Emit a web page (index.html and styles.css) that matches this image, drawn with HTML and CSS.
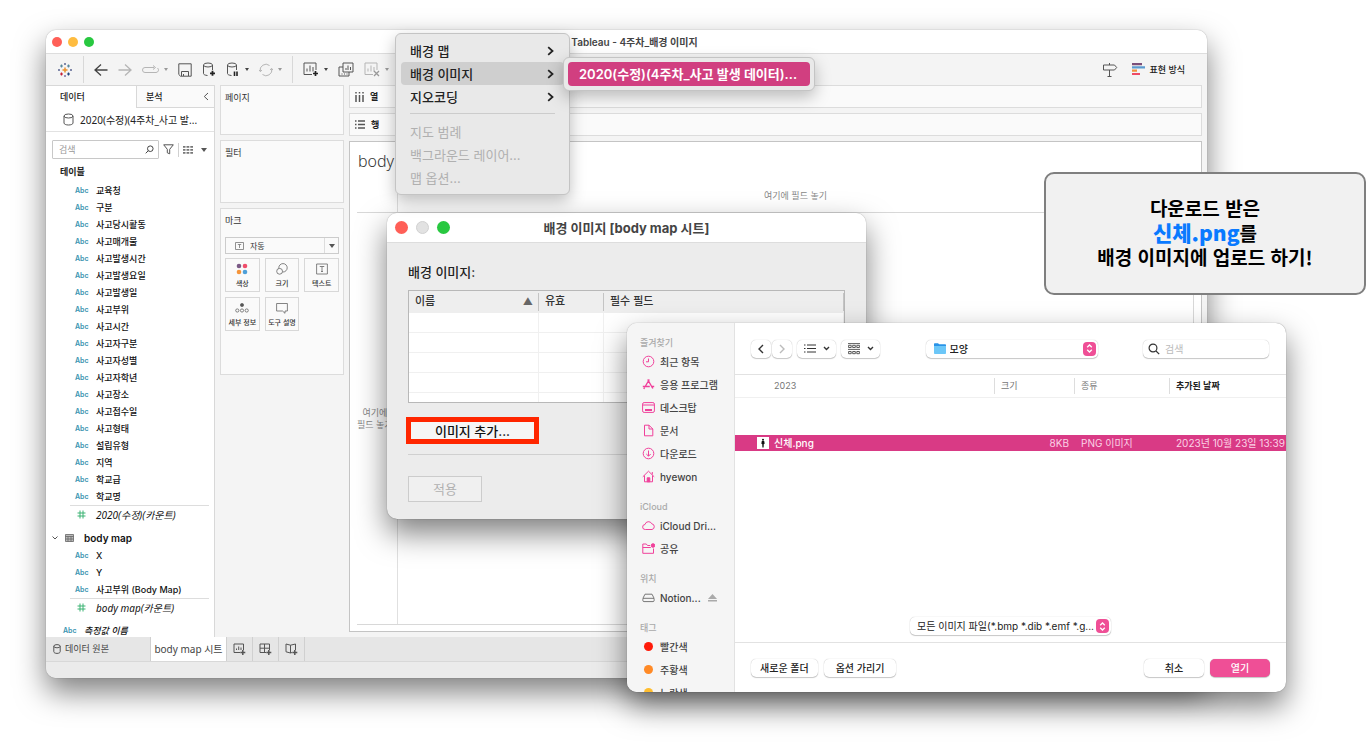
FILE: index.html
```html
<!DOCTYPE html>
<html lang="ko">
<head>
    <meta charset="UTF-8">
    <meta name="viewport" content="width=device-width, initial-scale=1.0">
    <title>Tableau - 4주차_배경 이미지</title>
    <link rel="stylesheet" href="styles.css">
</head>
<body>
    <div class="desktop">
        <!-- Main window -->
        <div class="window app">
            <header class="titlebar">
                <div class="lights"><i class="light red"></i><i class="light yellow"></i><i class="light green"></i></div>
                <h1>Tableau - 4주차_배경 이미지</h1>
            </header>

            <div class="toolbar">
                <svg class="logo" width="16" height="16" viewBox="0 0 16 16" fill="none" stroke-width="1.2">
                    <path stroke="#eb912c" stroke-width="1.5" d="M8 5.5v5M5.5 8h5"/>
                    <path stroke="#59879b" d="M4.5 2.5v3M3 4h3M11.5 2.5v3M10 4h3"/>
                    <path stroke="#c72035" d="M4.5 10.5v3M3 12h3"/>
                    <path stroke="#1f447e" d="M11.5 10.5v3M10 12h3"/>
                    <path stroke="#5b6591" stroke-width="1" d="M8 1v2M7 2h2M14 7v2M13 8h2M2 7v2M1 8h2"/>
                    <path stroke="#7b6fa5" stroke-width="1" d="M8 13v2M7 14h2"/>
                </svg>
                <span class="divider"></span>
                <button class="tool" aria-label="뒤로"><svg width="14" height="14" viewBox="0 0 14 14"><path d="M13.500 7H1M7 1.500L1 7l6 5.500" stroke="#444" stroke-width="1.300"/></svg></button>
                <button class="tool off" aria-label="앞으로"><svg width="14" height="14" viewBox="0 0 14 14"><path stroke-width="1.300" d="M.5 7H13M7 1.500L13 7l-6 5.500"/></svg></button>
                <button class="tool off menu-tool" aria-label="다시 실행"><svg width="17" height="12" viewBox="0 0 17 12"><path d="M12 3.500H3a2.500 2.500 0 0 0 0 5h11a2.500 2.500 0 0 0 1.500-4.500M12 3.500H9.500M11 1.500l2.500 2-2.500 2"/></svg><i class="caret"></i></button>
                <button class="tool" aria-label="저장"><svg width="14" height="14" viewBox="0 0 14 14"><path d="M.8.8h12.400v12.400H2.500L.8 11.500zM3.500 13V8.500h7V13M5.500 13v-2"/></svg></button>
                <button class="tool" aria-label="새 데이터 원본"><svg width="14" height="15" viewBox="0 0 14 15"><ellipse cx="6" cy="3" rx="4.500" ry="2"/><path d="M1.500 3v8.500c0 1 1.500 1.800 4 2M10.500 3v5"/><path d="M10.500 8.800v5M8 11.300h5" stroke="#222" stroke-width="1.800"/></svg></button>
                <button class="tool menu-tool" aria-label="업데이트 일시 중지"><svg width="14" height="15" viewBox="0 0 14 15"><ellipse cx="6" cy="3" rx="4.500" ry="2"/><path d="M1.500 3v8.500c0 1 1.500 1.800 4 2M10.500 3v5"/><path d="M8.500 9.500v4.500M11 9.500v4.500" stroke="#222" stroke-width="1.600"/></svg><i class="caret dark"></i></button>
                <button class="tool off menu-tool" aria-label="새로 고침"><svg width="14" height="14" viewBox="0 0 14 14"><path d="M1.300 8.500A5.800 5.800 0 0 1 10.500 2.500M12.700 5.500A5.800 5.800 0 0 1 3.500 11.500M0 6.800l1.300 1.700L3 7.200M14 7.200l-1.300-1.700L11 6.800"/></svg><i class="caret"></i></button>
                <span class="divider"></span>
                <button class="tool menu-tool" aria-label="새 워크시트"><svg width="16" height="15" viewBox="0 0 16 15"><path d="M9 12.500H1V1h12v7M4 9.500v-3M7 9.500v-6M10 9.500V5" /><path d="M12.500 9v5M10 11.500h5" stroke="#222" stroke-width="1.700"/></svg><i class="caret dark"></i></button>
                <button class="tool" aria-label="복제"><svg width="16" height="15" viewBox="0 0 16 15"><path d="M5 1h10v9H5zM8 8V6M10 8V3.500M12.500 8V5M5 5H1v9h10v-4M4 11.500v1M6.500 11.500v1M9 11.500v1"/></svg></button>
                <button class="tool off menu-tool" aria-label="시트 지우기"><svg width="16" height="15" viewBox="0 0 16 15"><path d="M9 12.500H1V1h12v7M4 9.500v-3M7 9.500v-6M10 9.500V5"/><path d="M10 9l5 5M15 9l-5 5" stroke="#999" stroke-width="1.300"/></svg><i class="caret"></i></button>
                <div class="toolbar-end">
                    <button class="tool" aria-label="데이터 가이드"><svg width="16" height="16" viewBox="0 0 16 16"><path d="M1.500 3h11l2.200 2.500L12.500 8h-11zM7.500 1v2M7.500 8v6.500M5.500 14.500h4"/></svg></button>
                    <button class="show-me">
                        <svg width="14" height="13" viewBox="0 0 14 13"><path fill="#7b4f79" d="M0 0h10v2.200H0z"/><path fill="#5b9bd0" d="M0 3.300h13v2.200H0z"/><path fill="#f0903c" d="M0 6.600h5v2.200H0z"/><path fill="#ee4b66" d="M0 9.900h8v2.200H0z"/></svg>
                        표현 방식
                    </button>
                </div>
            </div>

            <div class="workspace">
                <aside class="data-pane">
                    <div class="pane-tabs">
                        <button class="pane-tab active">데이터</button>
                        <button class="pane-tab">분석 <svg width="6" height="9" viewBox="0 0 6 9" fill="none" stroke="#555"><path d="M5 1L1.300 4.500 5 8"/></svg></button>
                    </div>
                    <div class="source">
                        <svg width="11" height="13" viewBox="0 0 11 13" fill="none" stroke="#555"><ellipse cx="5.500" cy="3" rx="4.500" ry="2"/><path d="M1 3v7c0 1.200 2 2 4.500 2S10 11.200 10 10V3"/></svg>
                        2020(수정)(4주차_사고 발...
                    </div>
                    <div class="search-row">
                        <div class="search-box">
                            <input type="text" placeholder="검색" aria-label="필드 검색">
                            <svg width="9" height="9" viewBox="0 0 9 9" fill="none" stroke="#444"><circle cx="5.300" cy="3.700" r="2.800"/><path d="M3.300 5.700L.7 8.300"/></svg>
                        </div>
                        <svg width="11" height="11" viewBox="0 0 11 11" fill="none" stroke="#555"><path d="M.7.8h9.600L6.700 5.300v4.500l-2.400-1V5.300z"/></svg>
                        <span class="search-divider"></span>
                        <svg width="10" height="8" viewBox="0 0 10 8" fill="#777"><path d="M0 0h2.500v1.800H0zM3.500 0h2.800v1.800H3.500zM7.300 0H10v1.800H7.300zM0 3h2.500v1.800H0zM3.500 3h2.800v1.800H3.500zM7.300 3H10v1.800H7.300zM0 6h2.500v1.800H0zM3.500 6h2.800v1.800H3.500zM7.300 6H10v1.800H7.300z"/></svg>
                        <i class="caret big"></i>
                    </div>
                    <h2 class="fields-title">테이블</h2>
                    <ul class="fields">
                        <li><b>Abc</b>교육청</li>
                        <li><b>Abc</b>구분</li>
                        <li><b>Abc</b>사고당시활동</li>
                        <li><b>Abc</b>사고매개물</li>
                        <li><b>Abc</b>사고발생시간</li>
                        <li><b>Abc</b>사고발생요일</li>
                        <li><b>Abc</b>사고발생일</li>
                        <li><b>Abc</b>사고부위</li>
                        <li><b>Abc</b>사고시간</li>
                        <li><b>Abc</b>사고자구분</li>
                        <li><b>Abc</b>사고자성별</li>
                        <li><b>Abc</b>사고자학년</li>
                        <li><b>Abc</b>사고장소</li>
                        <li><b>Abc</b>사고접수일</li>
                        <li><b>Abc</b>사고형태</li>
                        <li><b>Abc</b>설립유형</li>
                        <li><b>Abc</b>지역</li>
                        <li><b>Abc</b>학교급</li>
                        <li><b>Abc</b>학교명</li>
                        <li class="measure"><svg width="9" height="9" viewBox="0 0 9 9" fill="none" stroke="#3bb273"><path d="M3 .5v8M6 .5v8M.5 3h8M.5 6h8"/></svg><em>2020(수정)(카운트)</em></li>
                    </ul>
                    <div class="table-name">
                        <svg width="6" height="4" viewBox="0 0 6 4" fill="none" stroke="#555"><path d="M.5.5L3 3 5.500.5"/></svg>
                        <svg width="9" height="8" viewBox="0 0 9 8" fill="#bbb" stroke="#666"><path d="M.5.5h8v7h-8zM.5 2.500h8M.5 5h8M3 2.500v5M6 2.500v5" stroke-width=".8"/></svg>
                        body map
                    </div>
                    <ul class="fields">
                        <li><b>Abc</b>X</li>
                        <li><b>Abc</b>Y</li>
                        <li><b>Abc</b>사고부위 (Body Map)</li>
                        <li class="measure"><svg width="9" height="9" viewBox="0 0 9 9" fill="none" stroke="#3bb273"><path d="M3 .5v8M6 .5v8M.5 3h8M.5 6h8"/></svg><em>body map(카운트)</em></li>
                    </ul>
                    <ul class="fields loose">
                        <li><b>Abc</b><em>측정값 이름</em></li>
                    </ul>
                </aside>

                <div class="cards">
                    <section class="card pages">페이지</section>
                    <section class="card filters">필터</section>
                    <section class="card marks">
                        마크
                        <div class="mark-type">
                            <svg width="9" height="8" viewBox="0 0 9 8" fill="none" stroke="#777" stroke-width=".8"><path d="M.5.5h8v7h-8zM2.800 2.500h3.400M4.500 2.500v3.500"/></svg>
                            <select aria-label="마크 유형"><option>자동</option></select>
                            <span class="mark-arrow"><i class="caret big"></i></span>
                        </div>
                        <div class="mark-grid">
                            <button><svg width="12" height="12" viewBox="0 0 12 12"><circle cx="3" cy="3" r="2.300" fill="#7b5a86"/><circle cx="9" cy="3" r="2.300" fill="#f04d6b"/><circle cx="3" cy="9" r="2.300" fill="#f5953b"/><circle cx="9" cy="9" r="2.300" fill="#4fa0d8"/></svg>색상</button>
                            <button><svg width="12" height="12" viewBox="0 0 12 12"><circle cx="7" cy="4.800" r="4.200"/><circle cx="3.600" cy="8.300" r="2.900" fill="#fafafa"/></svg>크기</button>
                            <button><svg width="12" height="12" viewBox="0 0 12 12"><path d="M.6 1h10.800v10H.6zM4 4V3.500h4V4M6 3.500v5M5 8.500h2"/></svg>텍스트</button>
                            <button><svg width="14" height="12" viewBox="0 0 14 12"><circle cx="7" cy="3" r="1.600" fill="#555"/><circle cx="2.300" cy="8.500" r="1.600"/><circle cx="7" cy="8.500" r="1.600"/><circle cx="11.700" cy="8.500" r="1.600"/></svg>세부 정보</button>
                            <button><svg width="12" height="12" viewBox="0 0 12 12"><path d="M.6 1.500h10.800v7.500H9V11.300L6.500 9H.6z"/></svg>도구 설명</button>
                        </div>
                    </section>
                </div>

                <main class="view-pane">
                    <div class="shelf"><svg width="9" height="10" viewBox="0 0 9 10" stroke="#555" stroke-width="1.500"><path d="M1 0v1.500M1 3v7M4.500 0v1.500M4.500 3v7M8 0v1.500M8 3v7"/></svg>열</div>
                    <div class="shelf"><svg width="10" height="9" viewBox="0 0 10 9" stroke="#555" stroke-width="1.500"><path d="M0 1h1.500M3 1h7M0 4.500h1.500M3 4.500h7M0 8h1.500M3 8h7"/></svg>행</div>
                    <div class="view">
                        <h2>body map 시트</h2>
                        <div class="crosstab">
                            <div class="corner"></div>
                            <div class="drop-cols">여기에 필드 놓기</div>
                            <div class="drop-rows">여기에<br>필드 놓기</div>
                            <div class="drop-body"></div>
                        </div>
                    </div>
                </main>
            </div>

            <nav class="sheet-tabs">
                <button class="sheet source-tab"><svg width="8" height="10" viewBox="0 0 8 10" fill="none" stroke="#555"><ellipse cx="4" cy="2.200" rx="3.200" ry="1.600"/><path d="M.8 2.200v5.500c0 1 1.400 1.700 3.200 1.700s3.200-.7 3.200-1.700V2.200"/></svg>데이터 원본</button>
                <button class="sheet current">body map 시트</button>
                <button class="sheet icon" aria-label="새 워크시트"><svg width="13" height="13" viewBox="0 0 13 13"><path d="M7 9.500H1V1h9.500v6M3.500 7V5.500M5.700 7V3.500M8 7V4.500"/><path d="M9.800 7v5M7.300 9.500h5" stroke-width="1.500"/></svg></button>
                <button class="sheet icon" aria-label="새 대시보드"><svg width="13" height="13" viewBox="0 0 13 13"><path d="M7 9.500H1V1h9.500v6M1 5.200h9.500M5.500 1v8.500"/><path d="M9.800 7v5M7.300 9.500h5" stroke-width="1.500"/></svg></button>
                <button class="sheet icon" aria-label="새 스토리"><svg width="13" height="13" viewBox="0 0 13 13"><path d="M7 9.500L5.500 10 1 8.800V1l4.500 1.200L10.500 1v6M5.500 2.200V10"/><path d="M9.800 7v5M7.300 9.500h5" stroke-width="1.500"/></svg></button>
            </nav>
            <footer class="status"></footer>
        </div>

        <!-- Background images dialog -->
        <div class="window images-dialog">
            <header class="titlebar">
                <div class="lights"><i class="light red"></i><i class="light gray"></i><i class="light green"></i></div>
                <h2>배경 이미지 [body map 시트]</h2>
            </header>
            <div class="images-body">
                <p id="images-label">배경 이미지:</p>
                <table class="images-table" aria-labelledby="images-label">
                    <thead>
                        <tr><th class="col-name"><div>이름 <span class="sort">▲</span></div></th><th class="col-valid"><div>유효</div></th><th><div>필수 필드</div></th></tr>
                    </thead>
                    <tbody>
                        <tr><td></td><td></td><td></td></tr>
                        <tr><td></td><td></td><td></td></tr>
                        <tr><td></td><td></td><td></td></tr>
                        <tr><td></td><td></td><td></td></tr>
                        <tr class="cut"><td></td><td></td><td></td></tr>
                    </tbody>
                </table>
                <div class="highlight"><button>이미지 추가...</button></div>
                <hr>
                <button class="apply" disabled>적용</button>
            </div>
        </div>

        <!-- Map menu -->
        <div class="menu">
            <button>배경 맵 <svg width="7" height="10" viewBox="0 0 7 10"><path d="M1.200 1.200L5.500 5 1.200 8.800"/></svg></button>
            <button class="open">배경 이미지 <svg width="7" height="10" viewBox="0 0 7 10"><path d="M1.200 1.200L5.500 5 1.200 8.800"/></svg></button>
            <button>지오코딩 <svg width="7" height="10" viewBox="0 0 7 10"><path d="M1.200 1.200L5.500 5 1.200 8.800"/></svg></button>
            <hr>
            <button disabled>지도 범례</button>
            <button disabled>백그라운드 레이어...</button>
            <button disabled>맵 옵션...</button>
        </div>
        <div class="menu submenu">
            <button>2020(수정)(4주차_사고 발생 데이터)...</button>
        </div>

        <!-- File picker -->
        <div class="window picker">
            <aside class="places">
                <h3>즐겨찾기</h3>
                <a href="#"><svg width="13" height="13" viewBox="0 0 13 13"><circle cx="6.500" cy="6.500" r="5.300"/><path d="M6.500 3.500v3.300H4"/></svg>최근 항목</a>
                <a href="#"><svg width="13" height="13" viewBox="0 0 13 13"><path stroke-width="1.400" d="M7.300 1.500L3.500 8M5.700 1.500L10.800 10.500M.8 8.500h7M9.500 8.500h2.700M2.600 9.500L1.800 11"/></svg>응용 프로그램</a>
                <a href="#"><svg width="13" height="13" viewBox="0 0 13 13"><rect x=".6" y="1.600" width="11.800" height="9.800" rx="1.500"/><path d="M.6 4h11.800"/><path stroke-width="1.800" d="M3 9h7"/></svg>데스크탑</a>
                <a href="#"><svg width="13" height="13" viewBox="0 0 13 13"><path d="M2.500 1.200h4.500l3.800 3.800v6.800H2.500zM7 1.200V5h3.800"/></svg>문서</a>
                <a href="#"><svg width="13" height="13" viewBox="0 0 13 13"><circle cx="6.500" cy="6.500" r="5.300"/><path d="M6.500 3.500v5.500M4.300 7l2.200 2.200L8.700 7"/></svg>다운로드</a>
                <a href="#"><svg width="13" height="13" viewBox="0 0 13 13"><path d="M.8 6.800L6.500 1.200l5.700 5.600M2.500 5.500v6.300h8V5.500M10.300 4.500V2"/><path fill="#f0419b" d="M5.200 7.800h2.600v4H5.200z"/></svg>hyewon</a>
                <h3>iCloud</h3>
                <a href="#"><svg width="13" height="13" viewBox="0 0 13 13"><path d="M3.300 10.500a2.500 2.500 0 0 1-.3-5A3.600 3.600 0 0 1 9.800 4.800a2.900 2.900 0 0 1 .2 5.700z"/></svg>iCloud Dri...</a>
                <a href="#"><svg width="13" height="13" viewBox="0 0 13 13"><path d="M8 3.500H5.500L4.300 2H.8v9.300h10.700V6.500M.8 5.500h8"/><circle cx="11" cy="3.500" r="1.800" fill="#f0419b"/></svg>공유</a>
                <h3>위치</h3>
                <a href="#" class="gray"><svg width="13" height="13" viewBox="0 0 13 13"><path d="M.8 7.500L3 3.200h7l2.200 4.300M2 7.300h9a1.300 1.300 0 0 1 1.200 1.300v.7A1.300 1.300 0 0 1 11 10.600H2A1.300 1.300 0 0 1 .8 9.300v-.7A1.300 1.300 0 0 1 2 7.300z"/></svg>Notion... <svg class="eject" width="9" height="8" viewBox="0 0 9 8"><path d="M4.500 0L9 5H0zM0 6h9v1.600H0z"/></svg></a>
                <h3>태그</h3>
                <a href="#"><i class="tag tag-red"></i>빨간색</a>
                <a href="#"><i class="tag tag-orange"></i>주황색</a>
                <a href="#"><i class="tag tag-yellow"></i>노란색</a>
            </aside>
            <div class="picker-main">
                <div class="picker-bar">
                    <div class="bar-group">
                        <button class="mac-btn nav" aria-label="이전"><svg width="6" height="10" viewBox="0 0 6 10"><path d="M5 1L1 5l4 4"/></svg></button><button class="mac-btn nav" aria-label="다음" disabled><svg width="6" height="10" viewBox="0 0 6 10"><path d="M1 1l4 4-4 4"/></svg></button>
                        <button class="mac-btn wide" aria-label="목록 보기"><svg width="12" height="9" viewBox="0 0 12 9"><path stroke-width="1" d="M0 1h1.500M3 1h9M0 4.500h1.500M3 4.500h9M0 8h1.500M3 8h9"/></svg><svg width="7" height="5" viewBox="0 0 7 5"><path d="M1 1l2.500 2.500L6 1"/></svg></button>
                        <button class="mac-btn wide" aria-label="그룹"><svg width="12" height="12" viewBox="0 0 12 12"><path stroke-width=".8" d="M0 .6h12M0 6.400h12M.6 2.300h2.600v2.200H.6zM4.700 2.300h2.600v2.200H4.700zM8.800 2.300h2.600v2.200H8.800zM.6 8.500h2.600v2.200H.6zM4.700 8.500h2.600v2.200H4.700zM8.800 8.500h2.600v2.200H8.800z"/></svg><svg width="7" height="5" viewBox="0 0 7 5"><path d="M1 1l2.500 2.500L6 1"/></svg></button>
                    </div>
                    <div class="mac-select folder">
                        <svg width="12" height="11" viewBox="0 0 12 11"><path fill="#2a94e8" d="M0 1.200C0 .5.400.2 1 .2h3l1.200 1h6c.5 0 .8.300.8.800v3H0z"/><path fill="#6cc7f8" d="M0 3h12v7c0 .6-.3.900-.8.900H.8C.3 10.900 0 10.600 0 10z"/></svg>
                        <select aria-label="폴더"><option>모양</option></select>
                        <span class="stepper"><svg width="7" height="9" viewBox="0 0 7 9"><path d="M1.200 3.200L3.500 1l2.300 2.200M1.200 5.800L3.500 8l2.300-2.200"/></svg></span>
                    </div>
                    <div class="mac-search">
                        <svg width="12" height="12" viewBox="0 0 12 12" fill="none" stroke="#333" stroke-width="1.200"><circle cx="5" cy="5" r="3.900"/><path d="M8 8l3.200 3.200"/></svg>
                        <input type="text" placeholder="검색" aria-label="파일 검색">
                    </div>
                </div>
                <table class="files">
                    <thead>
                        <tr><th class="file-name">2023</th><th class="file-size"><span>크기</span></th><th class="file-kind"><span>종류</span></th><th class="sorted"><span>추가된 날짜</span></th></tr>
                    </thead>
                    <tbody>
                        <tr class="blank"><td colspan="4"></td></tr>
                        <tr class="selected">
                            <td class="file-name"><div><svg width="12" height="12" viewBox="0 0 12 12"><path fill="#fff" d="M0 0h12v12H0z"/><circle cx="6" cy="2.800" r="1" fill="#111"/><path fill="#111" d="M4.800 4h2.400l.5 2.800-.9.300L6.600 10.500H5.400L5.200 7.100l-.9-.3z"/></svg>신체.png</div></td>
                            <td class="size">8KB</td>
                            <td>PNG 이미지</td>
                            <td>2023년 10월 23일 13:39</td>
                        </tr>
                    </tbody>
                </table>
                <div class="file-type">
                    <div class="mac-select type">
                        <select aria-label="파일 형식"><option>모든 이미지 파일(*.bmp *.dib *.emf *.g...</option></select>
                        <span class="stepper"><svg width="7" height="9" viewBox="0 0 7 9"><path d="M1.200 3.200L3.500 1l2.300 2.200M1.200 5.800L3.500 8l2.300-2.200"/></svg></span>
                    </div>
                </div>
                <footer class="picker-actions">
                    <button class="mac-btn">새로운 폴더</button>
                    <button class="mac-btn">옵션 가리기</button>
                    <button class="mac-btn action cancel">취소</button>
                    <button class="mac-btn action primary">열기</button>
                </footer>
            </div>
        </div>

        <div class="callout">
            다운로드 받은<br><strong>신체.png</strong>를<br>배경 이미지에 업로드 하기!
        </div>
    </div>
</body>
</html>
```

FILE: styles.css
```css
* {
    margin: 0;
    padding: 0;
    box-sizing: border-box;
}

body {
    background-color: #ffffff;
    color: #222222;
    font-family: Inter, 'Noto Sans CJK KR', sans-serif;
    font-size: 9px;
    line-height: 12px;
}

button,
input,
select {
    font: inherit;
    color: inherit;
    background: none;
    border: none;
    outline: none;
    appearance: none;
}

button {
    display: flex;
    align-items: center;
    justify-content: center;
    white-space: nowrap;
}

svg {
    flex: none;
}

ul {
    list-style: none;
}

.desktop {
    position: relative;
    height: 100vh;
    min-height: 700px;
    padding: 30px 159px 75px 46px;
    overflow: hidden;
}

.window {
    border-radius: 10px;
    overflow: hidden;
    box-shadow: 0 0 1px rgba(0, 0, 0, 0.5), 0 14px 30px rgba(0, 0, 0, 0.5);
}

.titlebar {
    display: grid;
    grid-template-columns: 1fr auto 1fr;
    align-items: center;
    background-color: #ffffff;
    border-bottom: 1px solid #dddddd;
}

.lights {
    display: flex;
}

.light {
    border-radius: 50%;
}

.red { background-color: #ff5f57; }
.yellow { background-color: #febc40; }
.green { background-color: #28c840; }
.gray.light { background-color: #e2e2e2; border: 1px solid #d0d0d0; }

.caret {
    border: 2px solid transparent;
    border-top: 3px solid #999999;
    border-bottom: none;
}

.caret.dark { border-top-color: #444444; }

.caret.big {
    border-width: 4px 3px 0;
    border-top-color: #555555;
}

/* Main window */
.app {
    display: flex;
    flex-direction: column;
    height: 100%;
    background-color: #f4f4f4;
}

.app .titlebar {
    height: 24px;
    padding: 0 6px;
}

.app .titlebar h1 {
    padding-left: 16px;
    font-size: 10px;
    font-weight: 600;
    color: #444444;
}

.app .lights { gap: 6px; }

.app .light {
    width: 10px;
    height: 10px;
}

.toolbar {
    display: flex;
    align-items: center;
    height: 31px;
    padding: 0 22px 0 11px;
    gap: 10px;
}

.divider {
    width: 1px;
    height: 27px;
    background-color: #d8d8d8;
}

.tool svg {
    fill: none;
    stroke: #555555;
}

.tool.off svg { stroke: #b5b5b5; }

.menu-tool { gap: 5px; }

.toolbar-end {
    display: flex;
    gap: 14px;
    margin-left: auto;
}

.show-me {
    gap: 3px;
    font-weight: 500;
}

.workspace {
    display: flex;
    flex: 1;
    min-height: 0;
}

.data-pane {
    width: 169px;
    flex: none;
    background-color: #ffffff;
    border-right: 1px solid #d8d8d8;
    overflow: hidden;
}

.pane-tabs {
    display: flex;
    height: 23px;
    border-top: 1px solid #d8d8d8;
}

.pane-tab {
    width: 90px;
    padding-left: 14px;
    justify-content: flex-start;
    font-weight: 500;
}

.pane-tab + .pane-tab {
    width: 78px;
    padding: 0 5px 0 9px;
    justify-content: space-between;
    background-color: #fafafa;
    border: 1px solid #d8d8d8;
    border-top: none;
    border-right: none;
}

.source {
    display: flex;
    align-items: center;
    gap: 6px;
    height: 24px;
    padding-left: 17px;
    border-bottom: 1px solid #e2e2e2;
    font-family: 'Noto Sans', 'Noto Sans CJK KR', sans-serif;
    font-size: 10px;
    white-space: nowrap;
}

.search-row {
    display: flex;
    align-items: center;
    gap: 4px;
    padding: 8px 0 0 6px;
}

.search-box {
    display: flex;
    align-items: center;
    flex: none;
    width: 107px;
    height: 19px;
    padding: 0 4px 0 6px;
    border: 1px solid #c8c8c8;
    border-radius: 1px;
}

.search-box input {
    flex: 1;
    min-width: 0;
}

input::placeholder {
    color: #999999;
    opacity: 1;
}

.search-divider {
    width: 1px;
    height: 14px;
    background-color: #d0d0d0;
}

.search-row .caret { margin-left: 4px; }

.fields-title {
    padding: 7px 0 4px 14px;
    font-size: 9px;
    font-weight: 600;
}

.fields li {
    display: flex;
    align-items: center;
    height: 17px;
    padding-left: 29px;
    font-weight: 500;
    color: #111111;
}

.fields b {
    width: 21px;
    font-size: 7px;
    font-weight: 600;
    color: #3a93b0;
}

.fields .measure {
    height: 18px;
    margin: 0 5px 0 24px;
    padding-left: 7px;
    border-top: 1px solid #dddddd;
}

.measure em {
    font-family: 'Noto Sans', 'Noto Sans CJK KR', sans-serif;
    font-size: 10px;
    font-weight: 400;
}

.measure svg { margin-right: 10px; }

.fields.loose {
    margin-top: 6px;
}

.fields.loose li { padding-left: 17px; }

.table-name {
    display: flex;
    align-items: center;
    gap: 7px;
    height: 18px;
    margin-top: 6px;
    padding-left: 6px;
    font-size: 10px;
    font-weight: 600;
    color: #111111;
}

.table-name svg + svg { margin-right: 3px; }

.cards {
    display: flex;
    flex-direction: column;
    gap: 5px;
    width: 134px;
    flex: none;
    padding: 0 5px;
}

.card {
    padding: 6px 4px 5px;
    background-color: #fafafa;
    border: 1px solid #dcdcdc;
    color: #333333;
}

.pages { height: 50px; }
.filters { height: 63px; }
.marks { height: 167px; }

.mark-type {
    display: flex;
    align-items: center;
    height: 17px;
    margin-top: 10px;
    padding-left: 9px;
    border: 1px solid #cccccc;
}

.mark-type select {
    flex: 1;
    padding-left: 6px;
    font-size: 8px;
}

.mark-arrow {
    display: flex;
    align-items: center;
    justify-content: center;
    align-self: stretch;
    width: 14px;
    border-left: 1px solid #dddddd;
}

.mark-grid {
    display: grid;
    grid-template-columns: repeat(3, 1fr);
    gap: 5px;
    margin-top: 4px;
}

.mark-grid button {
    flex-direction: column;
    height: 34px;
    padding-top: 3px;
    border: 1px solid #d8d8d8;
    font-size: 7px;
    font-weight: 500;
}

.mark-grid svg {
    fill: none;
    stroke: #666666;
    stroke-width: 0.8;
    margin-bottom: 3px;
}

.mark-grid button:first-child svg { stroke: none; }

.view-pane {
    display: flex;
    flex-direction: column;
    gap: 5px;
    flex: 1;
    min-width: 0;
    padding: 0 5px 5px 0;
}

.shelf {
    display: flex;
    align-items: center;
    gap: 6px;
    height: 23px;
    padding-left: 5px;
    background-color: #fafafa;
    border: 1px solid #dcdcdc;
    font-weight: 600;
}

.view {
    display: flex;
    flex-direction: column;
    flex: 1;
    min-height: 0;
    padding: 0 7px 6px;
    background-color: #ffffff;
    border: 1px solid #c4c4c4;
}

.view h2 {
    padding: 9px 1px 10px;
    font-family: 'Noto Sans', 'Noto Sans CJK KR', sans-serif;
    font-size: 16px;
    font-weight: 300;
    line-height: 20px;
    color: #333333;
}

.crosstab {
    display: grid;
    grid-template-columns: 41px 1fr;
    grid-template-rows: 32px 1fr;
    flex: 1;
    border-right: 1px solid #d8d8d8;
    border-bottom: 1px solid #d8d8d8;
    color: #888888;
    text-align: center;
}

.corner,
.drop-rows {
    border-right: 1px solid #e0e0e0;
}

.corner,
.drop-cols {
    border-bottom: 1px solid #d8d8d8;
}

.drop-cols { padding-top: 9px; }

.drop-rows {
    display: flex;
    align-items: center;
    white-space: nowrap;
}

.sheet-tabs {
    display: flex;
    height: 25px;
    background-color: #e6e6e6;
    border-bottom: 1px solid #d8d8d8;
}

.sheet {
    border-right: 1px solid #d0d0d0;
    color: #444444;
}

.source-tab {
    gap: 4px;
    width: 105px;
    padding-left: 7px;
    justify-content: flex-start;
}

.current {
    width: 76px;
    background-color: #ffffff;
    font-family: 'Noto Sans', 'Noto Sans CJK KR', sans-serif;
    font-size: 10px;
}

.sheet.icon { width: 26px; }

.sheet.icon svg {
    fill: none;
    stroke: #555555;
}

.status {
    height: 16px;
    background-color: #ebebeb;
}

/* Background images dialog */
.images-dialog {
    position: absolute;
    left: 387px;
    top: 213px;
    width: 479px;
    height: 306px;
    background-color: #ececec;
    font-size: 13px;
}

.images-dialog .titlebar {
    height: 30px;
    padding: 0 8px;
}

.images-dialog h2 {
    font-size: 13px;
    font-weight: 700;
    color: #444444;
}

.images-dialog .lights { gap: 8px; }

.images-dialog .light {
    width: 13px;
    height: 13px;
}

.images-body {
    padding: 21px 21px 0;
}

.images-body p {
    line-height: 16px;
    font-weight: 500;
}

.images-table {
    width: 100%;
    margin-top: 10px;
    table-layout: fixed;
    border-collapse: separate;
    border-spacing: 0;
    border: 1px solid #b8b8b8;
    background-color: #ffffff;
    font-size: 11px;
}

.images-table th {
    height: 22px;
    background-color: #eeeeee;
    font-weight: 500;
    text-align: left;
    color: #333333;
}

.images-table th div {
    display: flex;
    justify-content: space-between;
    height: 18px;
    padding: 0 5px 0 6px;
    line-height: 16px;
    border-right: 1px solid #c4c4c4;
}

.sort {
    font-size: 10px;
    color: #666666;
}

.images-table td {
    height: 20px;
    border-right: 1px solid #f0f0f0;
    border-bottom: 1px solid #f0f0f0;
}

.images-table .cut td {
    height: 9px;
    border-bottom: none;
}

.col-name { width: 130px; }
.col-valid { width: 65px; }

.highlight {
    width: fit-content;
    margin: 14px 0 0 -2px;
    border: 5px solid #ff2600;
}

.highlight button {
    width: 123px;
    height: 17px;
    background-color: #f6f6f6;
    color: #111111;
    font-weight: 500;
}

.images-body hr {
    border: none;
    border-top: 1px solid #d0d0d0;
    margin: 10px 0 21px;
}

.apply {
    width: 74px;
    height: 26px;
    border: 1px solid #cccccc;
    background-color: #f0f0f0;
    color: #b0b0b0;
}

/* Menus */
.menu {
    position: absolute;
    left: 395px;
    top: 33px;
    width: 175px;
    padding: 5px;
    background-color: #e9e9e9;
    border: 1px solid #c4c4c4;
    border-radius: 6px;
    box-shadow: 0 6px 16px rgba(0, 0, 0, 0.25);
    font-size: 13px;
}

.menu button {
    width: 100%;
    height: 23px;
    padding: 0 10px 0 9px;
    justify-content: space-between;
    border-radius: 4px;
    font-weight: 500;
}

.menu button.open { background-color: #cfcfcf; }

.menu button:disabled {
    color: #b0b0b0;
    font-weight: 400;
}

.menu svg {
    fill: none;
    stroke: #222222;
    stroke-width: 1.8;
}

.menu hr {
    margin: 5px 9px 6px;
    border: none;
    border-top: 1px solid #cccccc;
}

.submenu {
    left: 563px;
    top: 57px;
    width: 252px;
    padding: 4px;
}

.submenu button {
    height: 24px;
    padding-left: 11px;
    background-color: #d13f80;
    color: #ffffff;
    font-weight: 600;
}

/* File picker */
.picker {
    position: absolute;
    left: 627px;
    top: 323px;
    display: flex;
    width: 659px;
    height: 369px;
    background-color: #ffffff;
    font-size: 10px;
}

.places {
    width: 108px;
    flex: none;
    padding-top: 1px;
    background-color: #f5f5f5;
    border-right: 1px solid #e2e2e2;
    overflow: hidden;
}

.places h3 {
    margin-top: 12px;
    padding-left: 13px;
    font-size: 9px;
    font-weight: 500;
    line-height: 14px;
    color: #aaaaaa;
}

.places a {
    display: flex;
    align-items: center;
    height: 23px;
    padding-left: 15px;
    gap: 5px;
    color: #444444;
    font-weight: 500;
    text-decoration: none;
    white-space: nowrap;
}

.places svg {
    fill: none;
    stroke: #f0419b;
}

.places .gray svg { stroke: #777777; }

.places .gray .eject {
    margin-left: 2px;
    fill: #aaaaaa;
    stroke: none;
}

.tag {
    width: 9px;
    height: 9px;
    margin: 0 2px;
    border-radius: 50%;
}

.tag-red { background-color: #ff1b0a; }
.tag-orange { background-color: #ff8a26; }
.tag-yellow { background-color: #ffbd2e; }

.picker-main {
    display: flex;
    flex-direction: column;
    flex: 1;
    min-width: 0;
}

.picker-bar {
    display: flex;
    justify-content: space-between;
    align-items: center;
    height: 52px;
    padding: 0 17px 0 16px;
    border-bottom: 1px solid #e2e2e2;
}

.bar-group {
    display: flex;
    gap: 5px;
}

.mac-btn,
.mac-select,
.mac-search {
    height: 18px;
    background-color: #ffffff;
    border-radius: 5px;
    box-shadow: 0 0 1px rgba(0, 0, 0, 0.3), 0 1px 1px rgba(0, 0, 0, 0.2);
}

.mac-btn svg {
    fill: none;
    stroke: #333333;
    stroke-width: 1.4;
}

.mac-btn:disabled svg { stroke: #bbbbbb; }

.nav { width: 20px; }
.nav + .nav { margin-left: -4px; }

.wide {
    width: 39px;
    gap: 7px;
}

.mac-select,
.mac-search {
    display: flex;
    align-items: center;
}

.mac-select select {
    flex: 1;
    min-width: 0;
    font-weight: 500;
}

.folder {
    width: 172px;
    gap: 4px;
    padding: 0 2px 0 8px;
}

.stepper {
    display: flex;
    align-items: center;
    justify-content: center;
    flex: none;
    width: 13px;
    height: 14px;
    border-radius: 4px;
    background-color: #ef4f96;
}

.stepper svg {
    fill: none;
    stroke: #ffffff;
    stroke-width: 1.3;
}

.mac-search {
    width: 126px;
    gap: 5px;
    padding-left: 5px;
}

.mac-search input {
    flex: 1;
    min-width: 0;
}

.mac-search input::placeholder { color: #bbbbbb; }

.files {
    width: 100%;
    table-layout: fixed;
    border-collapse: collapse;
}

.files th {
    height: 22px;
    border-bottom: 1px solid #f0f0f0;
    font-size: 9px;
    font-weight: 400;
    text-align: left;
    color: #777777;
}

.files th span {
    display: block;
    padding-left: 6px;
    line-height: 16px;
    border-left: 1px solid #dddddd;
}

.files .sorted {
    font-weight: 600;
    color: #222222;
}

.file-name { width: 259px; }
.file-size { width: 80px; }
.file-kind { width: 95px; }

.files th.file-name { padding-left: 39px; }
.files td.file-name { padding-left: 22px; }

.files .blank td { height: 38px; }

.selected td {
    height: 16px;
    padding-left: 7px;
    background-color: #d93a85;
    color: #fbd3e5;
    white-space: nowrap;
    overflow: hidden;
}

.selected .file-name {
    color: #ffffff;
    font-weight: 500;
}

.selected .file-name div {
    display: flex;
    align-items: center;
    gap: 5px;
}

.selected .size {
    padding-right: 5px;
    text-align: right;
}

.file-type {
    display: flex;
    justify-content: center;
    margin-top: auto;
    padding-bottom: 7px;
}

.type {
    width: 201px;
    padding: 0 2px 0 7px;
}

.type select { font-weight: 400; }

.picker-actions {
    display: flex;
    gap: 6px;
    height: 50px;
    padding: 16px 16px 0;
    border-top: 1px solid #e2e2e2;
}

.picker-actions .mac-btn {
    padding: 0 9px;
    font-weight: 500;
}

.picker-actions .mac-btn + .mac-btn:not(.action) { padding: 0 12px; }

.picker-actions .action { width: 60px; }

.cancel { margin-left: auto; }

.picker-actions .primary {
    background-color: #ef4f96;
    color: #ffffff;
}

/* Instruction box */
.callout {
    position: absolute;
    left: 1044px;
    top: 172px;
    width: 322px;
    height: 123px;
    padding-top: 22px;
    background-color: #f1f1f1;
    border: 2px solid #7f7f7f;
    border-radius: 10px;
    font-family: 'Noto Sans CJK KR', sans-serif;
    font-size: 19px;
    font-weight: 700;
    line-height: 24px;
    text-align: center;
    color: #000000;
}

.callout strong {
    font-size: 21px;
    color: #0a7aff;
}
```
